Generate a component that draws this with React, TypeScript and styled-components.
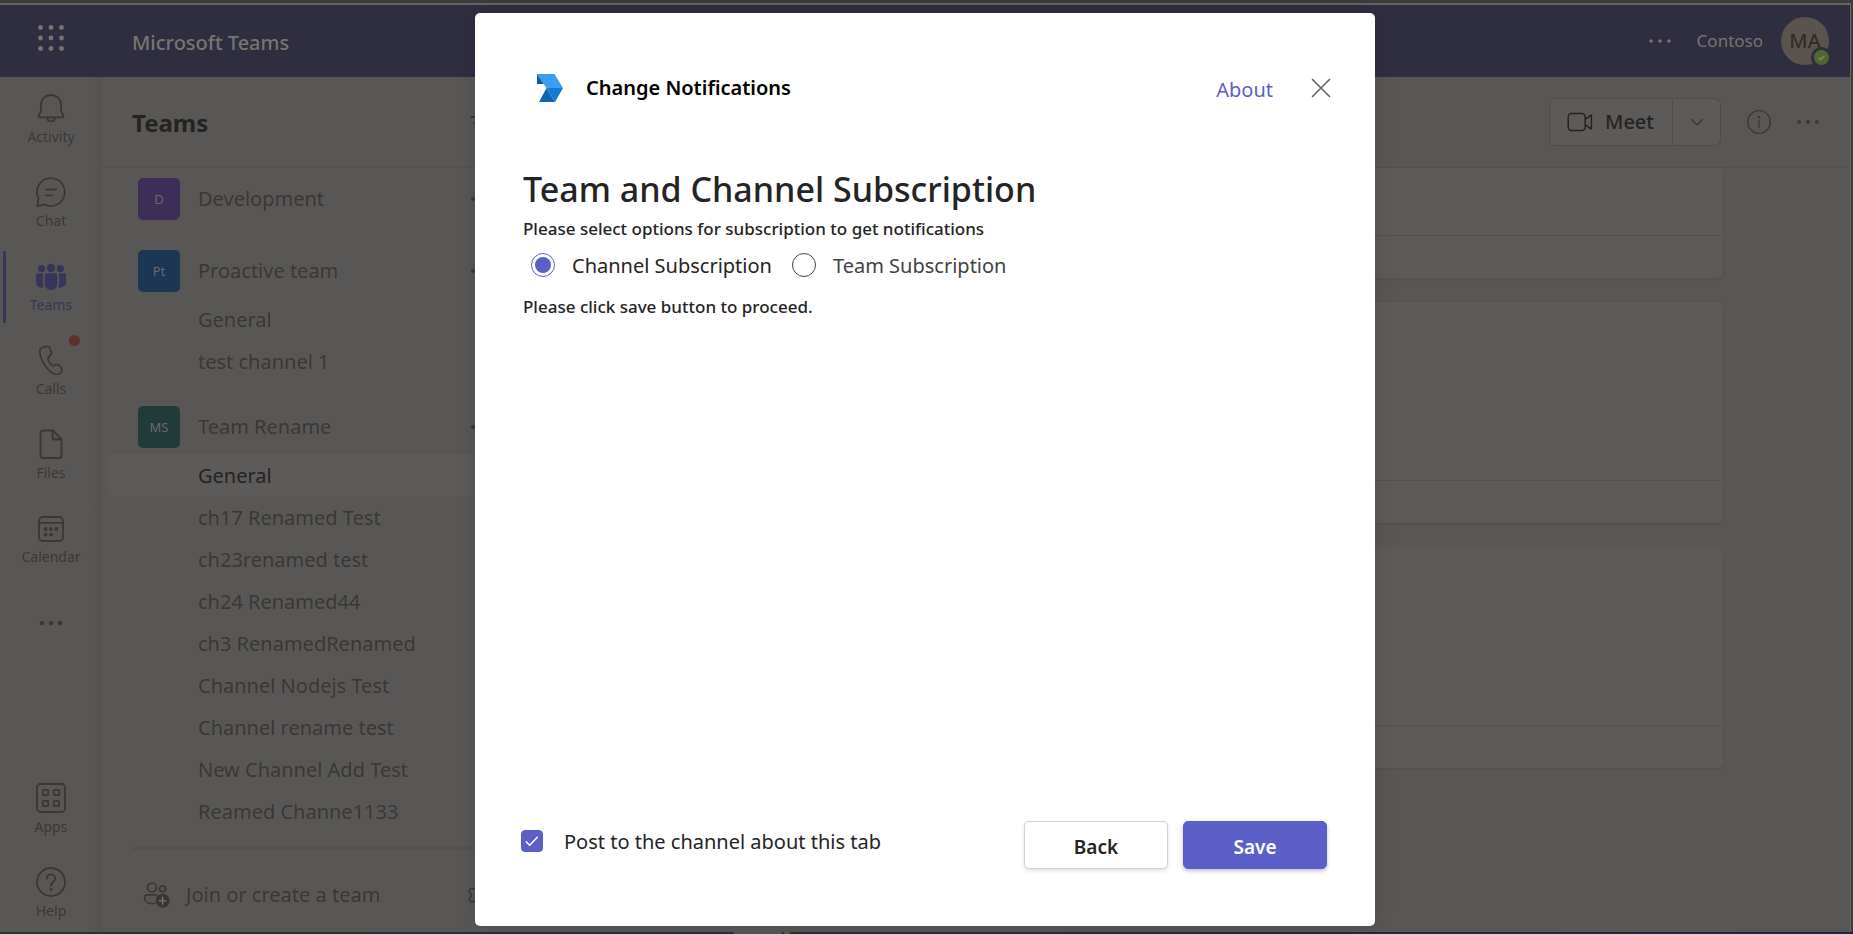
import React, { useState } from 'react';
import styled, { createGlobalStyle, css } from 'styled-components';
import { Settings } from 'lucide-react';

const c = {
  surface: '#595755',
  rail: '#585654',
  card: '#5d5b59',
  line: '#545250',
  ink: '#242322',
  muted: '#393836',
  header: '#2f2d40',
  headerText: '#77756f',
  active: '#37355b',
  brand: '#5b5fc7',
};

const GlobalStyle = createGlobalStyle`
  * { box-sizing: border-box; }
  body {
    margin: 0;
    background: #3c3c3c;
    font-family: 'Noto Sans', 'Open Sans', sans-serif;
    font-size: 20px;
    line-height: 28px;
    color: ${c.muted};
  }
  button, input { font: inherit; color: inherit; margin: 0; }
  svg { display: block; flex: none; }
  h1, h2, p, ul { margin: 0; padding: 0; }
  ul { list-style: none; }
`;

const Screen = styled.div`
  display: flex;
  flex-direction: column;
  min-height: 100vh;
  padding-top: 3px;
`;

const AppWindow = styled.div`
  position: relative;
  flex: 1;
  display: flex;
  flex-direction: column;
  margin-right: 2px;
  border-top: 2px solid #656565;
  border-right: 1px solid #6a6967;
`;

const Taskbar = styled.footer`
  display: flex;
  justify-content: center;
  gap: 2px;
  height: 2px;
  padding-right: 330px;
  background: linear-gradient(90deg, #1f3740, #1c3040 60%, #1a2446);
`;

const TaskbarItem = styled.span<{ $wide?: boolean }>`
  width: ${p => (p.$wide ? 48 : 6)}px;
  background: #4b5a62;
`;

const plainButton = css`
  border: 0;
  padding: 0;
  background: none;
  cursor: pointer;
`;

const IconButton = styled.button`
  ${plainButton}
  display: flex;
`;

const TitleBar = styled.header`
  display: flex;
  align-items: center;
  height: 72px;
  padding-right: 21px;
  background: ${c.header};
  color: ${c.headerText};
`;

const Waffle = styled(IconButton)`
  justify-content: center;
  width: 102px;
  padding-bottom: 6px;
`;

const ProductName = styled.span`
  flex: 1;
  padding-left: 30px;
  padding-top: 3px;
  font-weight: 500;
`;

const Tenant = styled.span`
  margin: 0 18px 0 25px;
  font-size: 17px;
`;

const Avatar = styled.span`
  position: relative;
  display: flex;
  align-items: center;
  justify-content: center;
  width: 48px;
  height: 48px;
  border-radius: 50%;
  background: #5b544e;
  color: #302b27;
  font-weight: 500;
`;

const Presence = styled.span`
  position: absolute;
  right: -3px;
  bottom: -3px;
  border: 3px solid ${c.header};
  border-radius: 50%;
`;

const Columns = styled.div`
  flex: 1;
  display: flex;
  background: ${c.surface};
`;

const Rail = styled.nav`
  display: flex;
  flex-direction: column;
  gap: 12px;
  width: 102px;
  padding: 6px 0 3px;
  background: linear-gradient(90deg, ${c.surface} 88%, #555351);
`;

const RailItem = styled.button<{ $active?: boolean }>`
  ${plainButton}
  position: relative;
  display: flex;
  flex-direction: column;
  align-items: center;
  gap: 4px;
  height: 72px;
  padding-top: 10px;
  font-size: 14px;
  line-height: 20px;
  color: ${p => (p.$active ? c.active : c.muted)};
  &::before {
    content: '';
    display: ${p => (p.$active ? 'block' : 'none')};
    position: absolute;
    left: 3px;
    top: 0;
    width: 3px;
    height: 72px;
    border-radius: 1px;
    background: ${c.active};
  }
`;

const MoreItem = styled(RailItem)`
  justify-content: center;
  padding: 0;
`;

const RailSpacer = styled.div`
  flex: 1;
`;

const Badge = styled.span`
  position: absolute;
  top: 0;
  right: 22px;
  width: 11px;
  height: 11px;
  border-radius: 50%;
  background: #5e3029;
`;

const Sidebar = styled.aside`
  display: flex;
  flex-direction: column;
  width: 420px;
`;

const SidebarHeader = styled.div`
  display: flex;
  align-items: center;
  justify-content: space-between;
  height: 91px;
  padding: 2px 28px 0 30px;
  border-bottom: 1px solid ${c.line};
`;

const SidebarTitle = styled.h2`
  font-size: 24px;
  line-height: 32px;
  font-weight: 700;
  color: ${c.ink};
`;

const TeamList = styled.ul`
  display: flex;
  flex-direction: column;
  gap: 18px;
  padding: 4px 6px 15px;
`;

const TeamRow = styled.div`
  display: flex;
  align-items: center;
  gap: 18px;
  height: 54px;
  padding: 0 22px 0 30px;
`;

const TeamTile = styled.span<{ $bg: string }>`
  width: 42px;
  border-radius: 5px;
  background: ${p => p.$bg};
  color: #6b6a6a;
  font-size: 13px;
  line-height: 42px;
  text-align: center;
`;

const TeamName = styled.span`
  flex: 1;
`;

const Channel = styled.a<{ $selected?: boolean }>`
  display: block;
  padding: 2px 0 0 90px;
  border-radius: 6px;
  line-height: 40px;
  color: ${p => (p.$selected ? c.ink : c.muted)};
  background: ${p => (p.$selected ? c.card : 'none')};
  text-decoration: none;
`;

const SidebarFooter = styled.div`
  display: flex;
  align-items: center;
  justify-content: space-between;
  flex: 1;
  margin-left: 30px;
  padding: 8px 30px 0 11px;
  border-top: 3px solid ${c.line};
`;

const JoinButton = styled(IconButton)`
  align-items: center;
  gap: 15px;
`;

const Main = styled.main`
  flex: 1;
  display: flex;
  flex-direction: column;
`;

const MainHeader = styled.div`
  display: flex;
  align-items: center;
  justify-content: flex-end;
  height: 91px;
  padding-right: 30px;
  border-bottom: 1px solid ${c.line};
`;

const SplitButton = styled.div`
  display: flex;
  margin-right: 26px;
  height: 48px;
  border: 1px solid #4d4c4a;
  border-radius: 6px;
  background: ${c.card};
`;

const MeetButton = styled(IconButton)`
  align-items: center;
  gap: 12px;
  padding: 0 18px 0 17px;
  color: ${c.ink};
  font-weight: 500;
`;

const MeetMenu = styled(IconButton)`
  align-items: center;
  justify-content: center;
  width: 48px;
  border-left: 1px solid #4d4c4a;
`;

const HeaderAction = styled(IconButton)`
  & + & { margin-left: 25px; }
`;

const Feed = styled.div`
  display: flex;
  flex-direction: column;
  gap: 24px;
  padding: 0 127px;
`;

const Post = styled.article<{ $first?: boolean }>`
  border-radius: ${p => (p.$first ? '0 0 6px 6px' : '6px')};
  background: ${c.card};
  box-shadow: 0 1px 3px rgba(0, 0, 0, 0.1);
`;

const PostBody = styled.div<{ $first?: boolean }>`
  height: ${p => (p.$first ? 68 : 179)}px;
  border-bottom: 1px solid ${c.line};
`;

const PostReply = styled.div`
  height: 42px;
`;

const Overlay = styled.div`
  position: absolute;
  inset: 0;
  display: flex;
  justify-content: center;
  padding: 8px 24px 6px;
`;

const Dialog = styled.section`
  display: flex;
  flex-direction: column;
  width: 900px;
  padding: 48px 48px 57px;
  border-radius: 5px;
  background: #fff;
  color: #242424;
  box-shadow: 0 0 20px rgba(0, 0, 0, 0.12);
`;

const DialogHeader = styled.div`
  display: flex;
  align-items: center;
  height: 54px;
  margin: 0 -6px 52px 0;
  padding-left: 14px;
`;

const DialogTitle = styled.h2`
  flex: 1;
  padding-left: 23px;
  font-size: 20px;
  line-height: 28px;
  font-weight: 600;
  color: #000;
`;

const AboutLink = styled.a`
  margin-right: 36px;
  padding-top: 4px;
  color: ${c.brand};
  text-decoration: none;
`;

const CloseButton = styled(IconButton)`
  color: #616161;
`;

const DialogBody = styled.div`
  flex: 1;
`;

const Heading = styled.h1`
  font-size: 34px;
  line-height: 44px;
  font-weight: 500;
`;

const Note = styled.p`
  padding-top: 2px;
  font-size: 17px;
  line-height: 32px;
  font-weight: 500;
`;

const Options = styled.div`
  display: flex;
  gap: 20px;
  margin-bottom: 4px;
  padding-left: 8px;
`;

const Option = styled.label`
  display: flex;
  align-items: center;
  gap: 17px;
  height: 40px;
  color: #424242;
  cursor: pointer;
  &:has(input:checked) { color: #242424; }
`;

const OptionText = styled.span`
  padding-top: 2px;
`;

const Radio = styled.input`
  appearance: none;
  width: 24px;
  height: 24px;
  border: 1px solid #424242;
  border-radius: 50%;
  background: #fff;
  &:checked {
    border-color: ${c.brand};
    padding: 3px;
    background: ${c.brand} content-box;
  }
`;

const DialogFooter = styled.div`
  display: flex;
  align-items: flex-start;
  gap: 15px;
`;

const CheckLabel = styled.label`
  flex: 1;
  display: flex;
  align-items: center;
  gap: 21px;
  height: 40px;
  cursor: pointer;
`;

const CheckSlot = styled.span`
  position: relative;
  display: flex;
  margin-left: -2px;
  svg {
    position: absolute;
    inset: 0;
    pointer-events: none;
  }
`;

const Checkbox = styled.input`
  appearance: none;
  width: 22px;
  height: 22px;
  border: 1px solid #616161;
  border-radius: 4px;
  &:checked {
    border-color: ${c.brand};
    background: ${c.brand};
  }
`;

const Button = styled.button<{ $primary?: boolean }>`
  width: 144px;
  height: 48px;
  border: 1px solid ${p => (p.$primary ? c.brand : '#d1d1d1')};
  border-radius: 5px;
  background: ${p => (p.$primary ? c.brand : '#fff')};
  color: ${p => (p.$primary ? '#fff' : '#242424')};
  font-weight: 600;
  font-size: 19px;
  padding: 3px 0 0;
  box-shadow: 0 2px 4px rgba(0, 0, 0, ${p => (p.$primary ? 0.25 : 0.12)});
  cursor: pointer;
`;

type IconProps = { size?: number; children: React.ReactNode; w?: number };
const Line = ({ size = 30, w = 1.8, children }: IconProps) => (
  <svg width={size} height={size} viewBox={`0 0 ${size} ${size}`} fill="none" stroke="currentColor" strokeWidth={w} strokeLinecap="round" strokeLinejoin="round" aria-hidden="true">
    {children}
  </svg>
);

const Dots = ({ r = 2, step = 9 }: { r?: number; step?: number }) => (
  <svg width="24" height="24" viewBox="0 0 24 24" fill="currentColor" aria-hidden="true">
    {[-1, 0, 1].map(i => <circle key={i} cx={12 + i * step} cy="12" r={r} />)}
  </svg>
);

const WaffleIcon = () => (
  <svg width="28" height="28" viewBox="0 0 28 28" fill="currentColor" aria-hidden="true">
    {[3.5, 14, 24.5].map(y => [3.5, 14, 24.5].map(x => <circle key={`${x}-${y}`} cx={x} cy={y} r="2.4" />))}
  </svg>
);

const BellIcon = () => (
  <Line>
    <path d="M15 2C9.2 2 4.9 6.4 4.9 12v5.800L2.600 23.200c-.2.6.1 1.200.8 1.200h23.200c.7 0 1-.6.8-1.200l-2.300-5.400V12C25.100 6.400 20.800 2 15 2Z" />
    <path d="M11 24.600c.3 2.300 1.900 3.800 4 3.800s3.700-1.500 4-3.800" />
  </Line>
);

const ChatIcon = () => (
  <Line>
    <path d="M15 1.200A13.900 13.900 0 1 1 8.600 27.500L1.300 29l1.300-7.300A13.900 13.900 0 0 1 15 1.200Z" />
    <path d="M10 12.500h10M10 18.300h6" />
  </Line>
);

const PeopleIcon = () => (
  <svg width="30" height="30" viewBox="0 0 30 30" fill="currentColor" aria-hidden="true">
    <circle cx="15" cy="7" r="4.300" />
    <circle cx="5.600" cy="7.700" r="3.600" />
    <circle cx="24.400" cy="7.700" r="3.600" />
    <path d="M8.700 14.500c0-1.300.9-2.200 2.200-2.200h8.200c1.300 0 2.200.9 2.200 2.200v8.300a6.300 6.300 0 0 1-12.600 0Z" />
    <path d="M7.100 12.300H2.200C.9 12.300 0 13.200 0 14.500v6.800c0 3.400 3.300 6 7.800 5.200-.5-1-.8-2.200-.8-3.500v-8.500c0-.8 0-1.500.1-2.200ZM22.900 12.300h4.900c1.300 0 2.200.9 2.200 2.200v6.800c0 3.400-3.300 6-7.800 5.200.5-1 .8-2.200.8-3.500v-8.500c0-.8 0-1.500-.1-2.200Z" />
  </svg>
);

const PhoneIcon = () => (
  <Line>
    <path d="M7.500 2.200l2.800-.8c1.500-.4 2.900.3 3.500 1.800L15.200 7c.5 1.300.1 2.500-.9 3.500L12 12.600c.3 3.300 2.100 6.300 4.700 8.300l3.500-1.200c1.300-.4 2.600 0 3.400 1l1.900 2.500c.9 1.200.8 2.700-.3 3.800l-1.300 1.300c-1.900 1.700-4.700 1.500-7.300-.1C9.700 23.600 4.600 15.200 3.800 7.500 3.500 5 5 2.900 7.500 2.200Z" />
  </Line>
);

const FileIcon = () => (
  <Line>
    <path d="M7.200 1.500h9.600l8.700 8.700v16c0 1.600-1 2.800-2.700 2.800H7.200c-1.700 0-2.700-1.200-2.700-2.800V4.300c0-1.600 1-2.800 2.700-2.800Z" />
    <path d="M16.500 1.800v7c0 1.100.6 1.700 1.700 1.700h7" />
  </Line>
);

const CalendarIcon = () => (
  <Line>
    <rect x="3" y="4" width="24" height="24" rx="4" />
    <path d="M3 9.800h24" />
    <g fill="currentColor" stroke="none">
      <circle cx="9.500" cy="16" r="1.900" /><circle cx="15" cy="16" r="1.900" /><circle cx="20.500" cy="16" r="1.900" />
      <circle cx="9.500" cy="21.600" r="1.900" /><circle cx="15" cy="21.600" r="1.900" />
    </g>
  </Line>
);

const AppsIcon = () => (
  <Line>
    <rect x="1" y="1" width="28" height="28" rx="3.500" />
    {[6.800, 17.800].map(y => [6.800, 17.800].map(x => <rect key={`${x}-${y}`} x={x} y={y} width="5.400" height="5.400" rx="0.600" />))}
  </Line>
);

const HelpIcon = () => (
  <Line>
    <circle cx="15" cy="15" r="14" />
    <path d="M10.800 11.500c0-2.500 1.800-4.100 4.200-4.100s4.200 1.700 4.200 4c0 3.300-4.200 3.900-4.200 7.400" />
    <circle cx="15" cy="22.500" r="0.700" fill="currentColor" />
  </Line>
);

const FilterIcon = () => (
  <Line size={24}><path d="M1 6h22M4.500 12h15M8 18h8" /></Line>
);

const JoinIcon = () => (
  <Line size={28} w={1.700}>
    <circle cx="9" cy="6.500" r="4.500" />
    <circle cx="19.500" cy="7.800" r="3" />
    <path d="M13.500 13.800H4.200c-1.600 0-2.700 1-2.700 2.600 0 3.800 3.200 6.200 7.500 6.200 1 0 1.900-.1 2.700-.3" />
    <circle cx="19.600" cy="19.800" r="6.200" fill="currentColor" />
    <path d="M19.600 16.500v6.600M16.300 19.800h6.600" stroke="#7a7876" strokeWidth="1.300" />
  </Line>
);

const CameraIcon = () => (
  <svg width="26" height="20" viewBox="0 0 26 20" fill="none" stroke="currentColor" strokeWidth="1.500" strokeLinejoin="round" aria-hidden="true">
    <rect x="1.200" y="1.500" width="17" height="17" rx="3.500" />
    <path d="M18.300 7.500l5.200-4.200c.4-.3.900 0 .9.500v12.400c0 .5-.5.8-.9.500l-5.200-4.200" />
  </svg>
);

const InfoIcon = () => (
  <Line size={24} w={1.300}>
    <circle cx="12" cy="12" r="11.300" />
    <path d="M12 10.200v7" />
    <circle cx="12" cy="7" r="0.700" fill="currentColor" />
  </Line>
);

const LogoIcon = () => (
  <svg width="26" height="28" viewBox="0 0 26 28" aria-hidden="true">
    <path fill="#3a9ff0" d="M0 0h17.500L26 14H9.500L0 0Z" />
    <path fill="#0d5ca3" d="M0 0v10h6.800L0 0Z" />
    <path fill="#137ad1" d="M9.500 14H26l-8 14L9.500 14Z" />
    <path fill="#0f66b5" d="M9.500 14L2 28h16L9.500 14Z" />
  </svg>
);

const railItems: { label: string; icon: React.ReactNode; active?: boolean; badge?: boolean }[] = [
  { label: 'Activity', icon: <BellIcon /> },
  { label: 'Chat', icon: <ChatIcon /> },
  { label: 'Teams', icon: <PeopleIcon />, active: true },
  { label: 'Calls', icon: <PhoneIcon />, badge: true },
  { label: 'Files', icon: <FileIcon /> },
  { label: 'Calendar', icon: <CalendarIcon /> },
];

const teams = [
  { tile: 'D', bg: '#3d2e59', name: 'Development', channels: [] as string[] },
  { tile: 'Pt', bg: '#1c3655', name: 'Proactive team', channels: ['General', 'test channel 1'] },
  {
    tile: 'MS', bg: '#213b3a', name: 'Team Rename', selected: 'General',
    channels: ['General', 'ch17 Renamed Test', 'ch23renamed test', 'ch24 Renamed44', 'ch3 RenamedRenamed', 'Channel Nodejs Test', 'Channel rename test', 'New Channel Add Test', 'Reamed Channe1133'],
  },
];

export default function App() {
  const [scope, setScope] = useState('Channel Subscription');
  const [post, setPost] = useState(true);

  return (
    <Screen>
      <GlobalStyle />
      <AppWindow>
        <TitleBar>
          <Waffle aria-label="App launcher"><WaffleIcon /></Waffle>
          <ProductName>Microsoft Teams</ProductName>
          <IconButton aria-label="Settings and more"><Dots r={1.8} /></IconButton>
          <Tenant>Contoso</Tenant>
          <Avatar>
            MA
            <Presence>
              <svg width="15" height="15" viewBox="0 0 15 15" aria-hidden="true">
                <circle cx="7.500" cy="7.500" r="7.500" fill="#50662f" />
                <path d="M4.500 7.800l2 2 4-4" fill="none" stroke="#85867c" strokeWidth="1.500" />
              </svg>
            </Presence>
          </Avatar>
        </TitleBar>

        <Columns>
          <Rail aria-label="Apps">
            {railItems.map(item => (
              <RailItem key={item.label} $active={item.active}>
                {item.icon}
                {item.label}
                {item.badge && <Badge />}
              </RailItem>
            ))}
            <MoreItem aria-label="More apps"><Dots r={2.3} /></MoreItem>
            <RailSpacer />
            <RailItem><AppsIcon />Apps</RailItem>
            <RailItem><HelpIcon />Help</RailItem>
          </Rail>

          <Sidebar>
            <SidebarHeader>
              <SidebarTitle>Teams</SidebarTitle>
              <IconButton aria-label="Filter"><FilterIcon /></IconButton>
            </SidebarHeader>
            <TeamList>
              {teams.map(team => (
                <li key={team.name}>
                  <TeamRow>
                    <TeamTile $bg={team.bg}>{team.tile}</TeamTile>
                    <TeamName>{team.name}</TeamName>
                    <IconButton aria-label={`More options for ${team.name}`}><Dots /></IconButton>
                  </TeamRow>
                  {team.channels.map(name => (
                    <Channel key={name} href="#" $selected={team.selected === name}>{name}</Channel>
                  ))}
                </li>
              ))}
            </TeamList>
            <SidebarFooter>
              <JoinButton><JoinIcon />Join or create a team</JoinButton>
              <IconButton aria-label="Manage teams"><Settings size={26} strokeWidth={1.5} /></IconButton>
            </SidebarFooter>
          </Sidebar>

          <Main>
            <MainHeader>
              <SplitButton>
                <MeetButton><CameraIcon />Meet</MeetButton>
                <MeetMenu aria-label="Meeting options">
                  <Line size={16} w={1.5}><path d="M2.500 5.500L8 11l5.500-5.500" /></Line>
                </MeetMenu>
              </SplitButton>
              <HeaderAction aria-label="Channel info"><InfoIcon /></HeaderAction>
              <HeaderAction aria-label="More options"><Dots /></HeaderAction>
            </MainHeader>
            <Feed>
              <Post $first><PostBody $first /><PostReply /></Post>
              <Post><PostBody /><PostReply /></Post>
              <Post><PostBody /><PostReply /></Post>
            </Feed>
          </Main>
        </Columns>

        <Overlay>
          <Dialog role="dialog" aria-modal="true" aria-labelledby="dialog-title">
            <DialogHeader>
              <LogoIcon />
              <DialogTitle id="dialog-title">Change Notifications</DialogTitle>
              <AboutLink href="#">About</AboutLink>
              <CloseButton aria-label="Close">
                <Line size={24} w={1.6}><path d="M3.500 3.500l17 17M20.500 3.500l-17 17" /></Line>
              </CloseButton>
            </DialogHeader>
            <DialogBody>
              <Heading>Team and Channel Subscription</Heading>
              <Note>Please select options for subscription to get notifications</Note>
              <Options role="radiogroup" aria-label="Subscription type">
                {['Channel Subscription', 'Team Subscription'].map(name => (
                  <Option key={name}>
                    <Radio type="radio" name="scope" checked={scope === name} onChange={() => setScope(name)} />
                    <OptionText>{name}</OptionText>
                  </Option>
                ))}
              </Options>
              <Note>Please click save button to proceed.</Note>
            </DialogBody>
            <DialogFooter>
              <CheckLabel>
                <CheckSlot>
                  <Checkbox type="checkbox" checked={post} onChange={e => setPost(e.target.checked)} />
                  {post && (
                    <svg width="22" height="22" viewBox="0 0 22 22" fill="none" stroke="#fff" strokeWidth="1.600" strokeLinecap="round" strokeLinejoin="round" aria-hidden="true">
                      <path d="M5.300 11.800l3.400 3.400 7.600-7.900" />
                    </svg>
                  )}
                </CheckSlot>
                <OptionText>Post to the channel about this tab</OptionText>
              </CheckLabel>
              <Button>Back</Button>
              <Button $primary>Save</Button>
            </DialogFooter>
          </Dialog>
        </Overlay>
      </AppWindow>
      <Taskbar aria-hidden="true"><TaskbarItem $wide /><TaskbarItem /></Taskbar>
    </Screen>
  );
}
